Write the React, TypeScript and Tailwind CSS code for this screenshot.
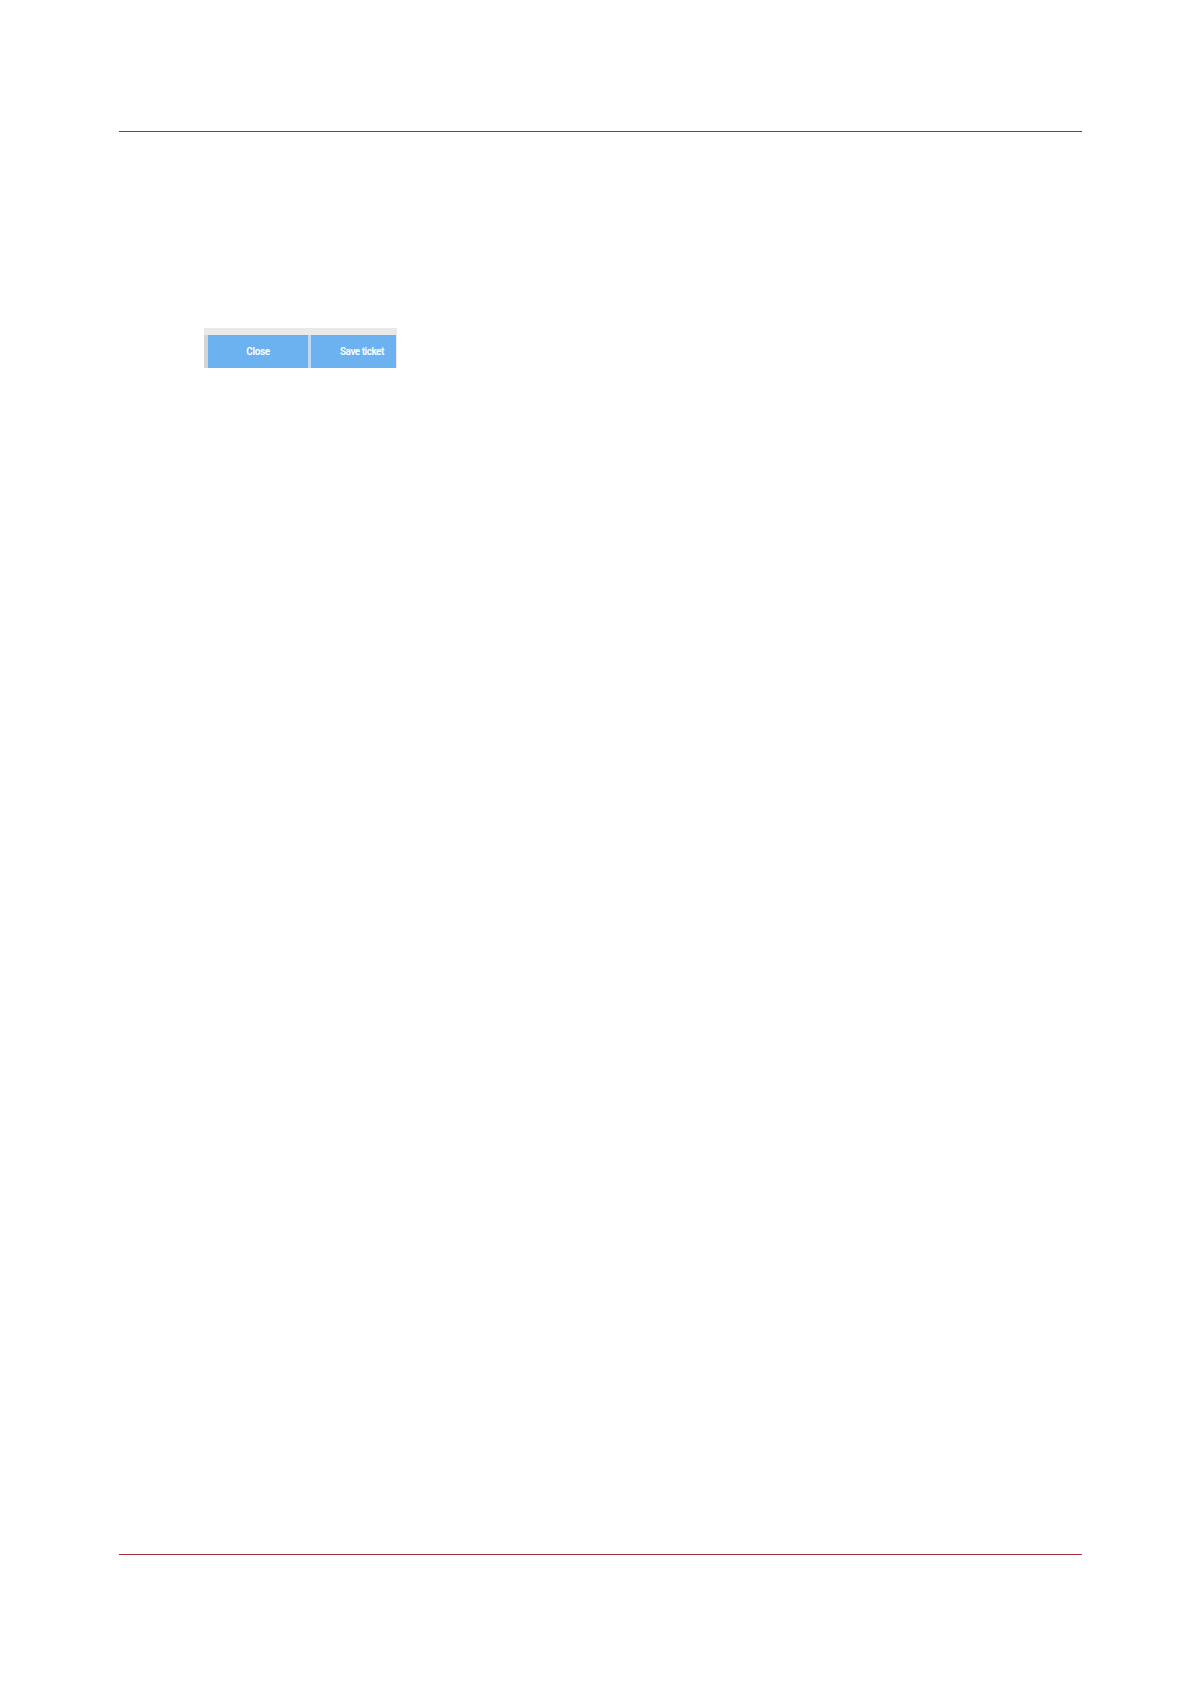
export default function App() {
    return (
        <div className="flex flex-col w-full h-[1684px] bg-white pt-[131px] pb-[129px] pl-[119px] pr-[109px] font-['Roboto',sans-serif]">
            {/* Header rule */}
            <div className="h-px w-full bg-[#a3303a]" />

            {/* Dialog footer snippet */}
            <div className="mt-[196px] ml-[85px] w-[193px] bg-[#e8e9e9] pt-[7px]">
                <div className="flex h-[33px]">
                    <div className="w-[4px] bg-[#d4d6d6]" />
                    <button className="w-[100px] bg-[#6cb2f0] text-white text-[10px] font-semibold tracking-[-0.4px] flex items-center justify-center">
                        Close
                    </button>
                    <div className="w-[3px] bg-[#bcdaf6]" />
                    <button className="w-[85px] bg-[#6cb2f0] text-white text-[10px] font-semibold tracking-[-0.5px] flex items-center justify-start pl-[29px] whitespace-nowrap">
                        Save ticket
                    </button>
                    <div className="w-[1px] bg-[#e8e9e9]" />
                </div>
            </div>

            {/* Footer rule */}
            <div className="mt-auto h-px w-full bg-[#a3303a]" />
        </div>
    );
}
